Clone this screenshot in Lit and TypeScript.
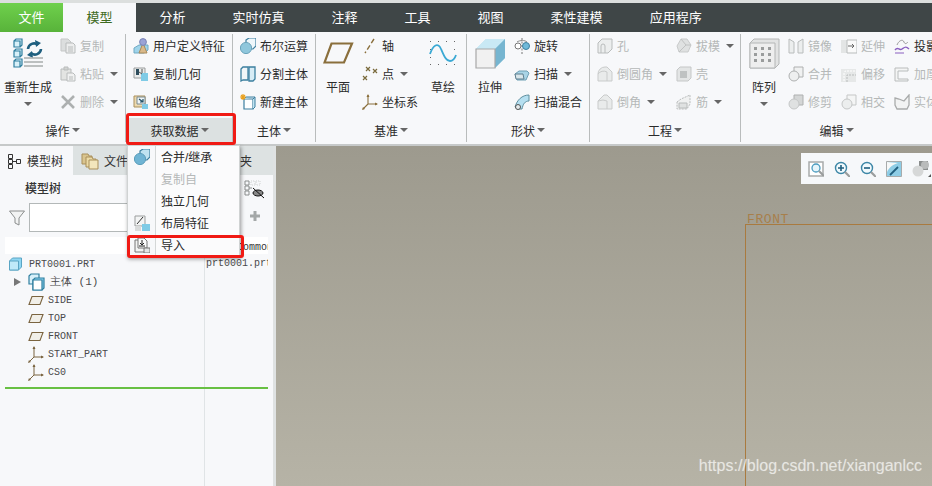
import { LitElement, html, css, svg } from 'lit';
import { customElement } from 'lit/decorators.js';

const ic = (body: unknown, w = 16, h = 16) =>
  html`<svg class="ic" width=${w} height=${h} viewBox="0 0 ${w} ${h}" fill="none">${body}</svg>`;

const G = '#b9bcbc'; // disabled stroke
const B = '#4b9cc0'; // blue stroke
const BR = '#8a6f3c'; // datum brown

const icons = {
  regen: ic(svg`
    <g fill="#d8f0f8" stroke="#2f7f9f" stroke-width="1.2">
      <path d="M1 3h6v6H1zM1 3l2-2h6v6l-2 2"/><path d="M1 13h6v6H1zM1 13l2-2h6v6l-2 2"/><path d="M1 23h6v6H1zM1 23l2-2h6v6l-2 2"/>
    </g>
    <path d="M15 11a6 6 0 0 1 10-4" stroke="#1f5f7f" stroke-width="2.6"/><path d="M22 2l6 3-5 4z" fill="#1f5f7f"/>
    <path d="M28 11a6 6 0 0 1-10 4" stroke="#1f5f7f" stroke-width="2.6"/><path d="M20 20l-6-3 5-4z" fill="#1f5f7f"/>
    <path d="M11 20h19M11 24h19M11 28h19" stroke="#a9adad" stroke-width="1.6"/>`, 31, 31),
  copy: ic(svg`<path d="M1 1h7l3 3v9H1z" fill="#dcdede" stroke="#c5c7c7"/><path d="M6 5h7l2 2v8H6z" fill="#eceded" stroke="${G}"/><path d="M8 9h5M8 11h5M8 13h5" stroke="${G}"/>`),
  paste: ic(svg`<path d="M1 3h10v11H1z" fill="#e3e4e2" stroke="${G}"/><path d="M4 1h4v3H4z" fill="#d2d4d2" stroke="${G}"/><path d="M7 7h6l2 2v6H7z" fill="#f0f1f1" stroke="${G}"/><path d="M9 11h4M9 13h4" stroke="${G}"/>`),
  del: ic(svg`<path d="M2 2l12 12M14 2L2 14" stroke="#adb0b0" stroke-width="2.6"/>`),
  udf: ic(svg`<path d="M1 10l5-3h9v5l-4 3H1z" fill="#9fd4ea" stroke="#6fa9c4"/><path d="M6 15l4-10 4 10z" fill="#d9b98a" stroke="#a98a5a"/><circle cx="10" cy="4" r="3.4" fill="#9aa3d6" stroke="#7a83b6"/>`),
  copygeo: ic(svg`<path d="M1 2h11v10H1z" fill="#e9ebeb" stroke="#9a9d9d"/><path d="M3 3h3v6H3z" fill="#2d4d5d"/><path d="M8 7h7v8H8z" fill="#7fcbe6"/><path d="M9 3v4M6 6l3 2" stroke="#555"/>`),
  shrink: ic(svg`<path d="M1 2h11v11H1z" fill="#ecd9ae" stroke="#a98f5a"/><path d="M4 3h8v7H4z" fill="#eef4f6" stroke="#7a8a90"/><path d="M6 5l4 3M10 5v3H7" stroke="#1f4f66" stroke-width="1.2"/><path d="M9 10h6v5H9z" fill="#7fcbe6"/>`),
  bool: ic(svg`<path d="M6 2l3-2h7v8l-3 3H6z" fill="#eef7fb" stroke="#3c7f9f" stroke-width="1.2"/><circle cx="6" cy="10" r="5.6" fill="#8fc7dc" stroke="#6ba3bb"/>`),
  split: ic(svg`<path d="M1 3l2-2h5v13H3l-2 1z" fill="#f2f6f8" stroke="#3c7f9f" stroke-width="1.3"/><path d="M9 1h6v12l-2 2H9z" fill="#d7ecf5" stroke="#3c7f9f" stroke-width="1.3"/>`),
  newbody: ic(svg`<path d="M4 5h9v10H4z" fill="#fff" stroke="#3c7f9f" stroke-width="1.2"/><path d="M13 5l2-2v10l-2 2M4 5l2-2h9" stroke="#3c7f9f" fill="#bfe3f1"/><path d="M3 0v6M0 3h6M1 1l4 4M5 1L1 5" stroke="#e9a11f" stroke-width="1.2"/>`),
  plane: ic(svg`<path d="M8.500 1.500H29L21 20.500H1.500z" stroke="${BR}" stroke-width="2.200"/>`, 31, 22),
  axis: ic(svg`<path d="M12 1L3 15" stroke="${BR}" stroke-width="1.400" stroke-dasharray="5 2.500"/>`),
  point: ic(svg`<path d="M4 1l4 4M8 1L4 5M11 3l4 4M15 3l-4 4M1 10l4 4M5 10l-4 4" stroke="#7a6a3c" stroke-width="1.200"/>`),
  csys: ic(svg`<path d="M6 1v9H15M6 10L1 15" stroke="${BR}" stroke-width="1.100"/><path d="M6 0l-1.500 3h3zM16 10l-3-1.500v3zM0 16l1-3 2 2z" fill="${BR}"/>`),
  sketch: ic(svg`
    <g fill="#666"><rect x="1" y="1" width="1" height="1"/><rect x="9" y="1" width="1" height="1"/><rect x="17" y="1" width="1" height="1"/><rect x="25" y="1" width="1" height="1"/>
    <rect x="1" y="9" width="1" height="1"/><rect x="25" y="9" width="1" height="1"/><rect x="1" y="17" width="1" height="1"/><rect x="25" y="17" width="1" height="1"/>
    <rect x="1" y="24" width="1" height="1"/><rect x="9" y="24" width="1" height="1"/><rect x="17" y="24" width="1" height="1"/><rect x="25" y="24" width="1" height="1"/></g>
    <path d="M1 14C4 5 9 2 12 9s5 12 9 12c3 0 5-3 6-6" stroke="#3aa9d4" stroke-width="1.800"/>`, 28, 26),
  extrude: ic(svg`<path d="M1 11L11 1h19v19L20 30H1z" fill="#a9d9ec"/><path d="M1 11L11 1h19L20 11z" fill="#c9e9f5"/><path d="M20 11L30 1v19L20 30z" fill="#76b5d0"/><path d="M1 11h19v19H1z" fill="#f1f1f1" stroke="#a8a8a8" stroke-width="1.200"/>`, 31, 31),
  revolve: ic(svg`<path d="M8 0v16" stroke="#777" stroke-dasharray="2 1.500"/><ellipse cx="4" cy="8" rx="3" ry="3" stroke="#777" fill="#fff"/><ellipse cx="12" cy="8" rx="3.500" ry="3.500" fill="#6fb9d9" stroke="#3c7f9f"/><path d="M3 4c3-2 8-2 10 0" stroke="#888"/>`),
  sweep: ic(svg`<path d="M1 8l4-3h8l2 2-3 7H3z" fill="#a9d4e6" stroke="#6f9fb4"/><path d="M1 8h8l1 5H2z" fill="#d9e6ea" stroke="#5f7f8f"/>`),
  blend: ic(svg`<path d="M1 13C3 6 8 1 15 1v6c-4 0-6 3-7 8H3z" fill="#b5dff0" stroke="#5f8f9f"/><circle cx="4" cy="13" r="2.500" fill="#e6ecee" stroke="#555"/>`),
  hole: ic(svg`<path d="M1 5l4-4h10v10l-4 4H1z" fill="#eceeee" stroke="${G}"/><path d="M4 15V8a2 2 0 0 1 4 0v7" stroke="${G}"/>`),
  round: ic(svg`<path d="M1 8a7 7 0 0 1 7-7h2l5 5v9H1z" fill="#e9ebeb" stroke="#c9cbcb"/><path d="M1 8a7 7 0 0 1 9-2v9" stroke="#c9cbcb"/>`),
  chamfer: ic(svg`<path d="M1 7l6-6h3l5 5v9H1z" fill="#e9ebeb" stroke="#c9cbcb"/><path d="M1 7l5-1 4 1v8" stroke="#c9cbcb"/>`),
  draft: ic(svg`<path d="M1 8l4-7h6l4 6-3 7H3z" fill="#dfe1e1" stroke="#c9cbcb"/><path d="M5 1l5 6-7 7M10 7l5 0" stroke="#c0c2c2"/>`),
  shell: ic(svg`<path d="M1 4l3-3h11v11l-3 3H1z" fill="#e3e5e5" stroke="#c5c7c7"/><path d="M4 5h7v7H4z" fill="#bfc2c2"/>`),
  rib: ic(svg`<path d="M1 8l4-3 9-4v9l-3 5H1z" fill="#f0f1f1" stroke="${G}" stroke-dasharray="2 1"/><path d="M3 9h8v5H3z" fill="#dfe1e1" stroke="${G}"/>`),
  pattern: ic(svg`<path d="M1 5l4-4h25v25l-4 4H1z" fill="#e2e3e3" stroke="#b4b6b6"/><path d="M1 5h25v25H1z" fill="#eeeeee" stroke="#b4b6b6"/>
    <g fill="#9a9c9c"><rect x="5" y="9" width="3" height="3"/><rect x="12" y="9" width="3" height="3"/><rect x="19" y="9" width="3" height="3"/><rect x="5" y="15" width="3" height="3"/><rect x="12" y="15" width="3" height="3"/><rect x="19" y="15" width="3" height="3"/><rect x="5" y="21" width="3" height="3"/><rect x="12" y="21" width="3" height="3"/><rect x="19" y="21" width="3" height="3"/></g>`, 31, 31),
  mirror: ic(svg`<path d="M1 1l5 3v11H1zM15 1l-5 3v11h5z" fill="#eceeee" stroke="${G}"/>`),
  extend: ic(svg`<path d="M0 2h6v13H0z" fill="#e3e5e5"/><path d="M6 2h10v13H6z" fill="#fafafa" stroke="${G}"/><path d="M7 8h6M11 6l2 2-2 2" stroke="#666"/>`),
  project: ic(svg`<path d="M3 7c2-5 6-6 7-3s3 1 4 0" stroke="#999"/><path d="M1 12c3-4 4 1 7-1s4-3 7 0" stroke="#8a5fc0" stroke-width="1.400"/><path d="M1 15h9" stroke="#8a5fc0"/>`),
  merge: ic(svg`<path d="M6 1h9v10H6z" fill="#f0f1f1" stroke="#aeb0b0"/><circle cx="6" cy="10" r="5" fill="#eeefef" stroke="#aeb0b0"/>`),
  offset: ic(svg`<path d="M0 3h15v13H0z" fill="#e6e8e8"/><path d="M3 15V7c0-1 1-2 2-2h10" stroke="#fff" stroke-dasharray="2 1"/><path d="M6 16V9h9" stroke="${G}" stroke-dasharray="2 1"/>`),
  thicken: ic(svg`<path d="M1 2h13v3H4v8h10v2H1z" fill="#f4f5f5" stroke="${G}"/>`),
  trim: ic(svg`<path d="M6 1h9v10H6z" fill="#d4d6d6" stroke="#aeb0b0"/><circle cx="6" cy="10" r="5" fill="#dfe1e1" stroke="#c5c7c7"/>`),
  intersect: ic(svg`<path d="M6 1h9v10H6z" fill="#f4f5f5" stroke="#c5c7c7"/><circle cx="6" cy="10" r="5" fill="#eceeee" stroke="#c5c7c7"/>`),
  solidify: ic(svg`<path d="M1 4l4 1 5 2 5-6v10l-2 4H3L1 11z" fill="#f2f3f3" stroke="#a9abab" stroke-width="1.300"/>`),
  mMerge: ic(svg`<path d="M6 2l3-2h7v8l-3 3H6z" fill="#bfe3f1" stroke="#3c7f9f" stroke-width="1.200"/><circle cx="6" cy="10" r="5.600" fill="#6fb4d4" stroke="#5a9dbb"/>`),
  mLayout: ic(svg`<path d="M1 1h10v10H1z" fill="#f3f4f4" stroke="#9a9d9d"/><path d="M3 9l6-7" stroke="#333"/><path d="M8 9h8v7H8z" fill="#7fcbe6"/><path d="M1 11h6v5H1z" fill="#d9dbdb"/>`),
  mImport: ic(svg`<path d="M1 3h11v12H1z" fill="#f2f3f3" stroke="#777"/><path d="M4 1h6l3 3v7H4z" fill="#fbfbfb" stroke="#777"/><path d="M8 3v5M6 6l2 2 2-2M5 9h6" stroke="#222"/><path d="M10 11h6v5h-6z" fill="#e3e5e5" stroke="#777"/>`),
  nodes: ic(svg`<path d="M1.500 1.500h4v4h-4zM1.500 6.500h4v4h-4zM1.500 11.500h4v4h-4zM9.500 6.500h4v4h-4z" stroke="#333"/><path d="M5.500 8.500h4" stroke="#333"/>`),
  folder: ic(svg`<path d="M1 2h6l1 2h3v8H1z" fill="#d9c48e" stroke="#a98f5a"/><path d="M5 5h6l1 2h3v8H5z" fill="#ecdba6" stroke="#a98f5a"/><path d="M8 8h9v9H8z" fill="#f3e6bc" stroke="#a98f5a"/>`, 19, 18),
  filter: ic(svg`<path d="M.5 1h15L10 8v7l-4-2V8z" fill="#f2f3f3" stroke="#8a8d8d"/>`),
  show: ic(svg`<path d="M1 1h4v4H1zM1 6h4v4H1zM1 11h4v4H1z" stroke="#8a8d8d"/><path d="M7 1h4v4H7zM12 1h4v4h-4z" stroke="#cfd1d1" stroke-dasharray="1 1"/><path d="M5 8h3" stroke="#8a8d8d"/><ellipse cx="14" cy="13" rx="5" ry="3" fill="#888" stroke="#111"/><path d="M9 8l11 10" stroke="#111"/>`, 20, 20),
  plus: ic(svg`<path d="M8 3v10M3 8h10" stroke="#a4a8a8" stroke-width="3"/>`),
  cube: ic(svg`<path d="M0.500 4l3-3h9v9l-3 3h-9z" fill="#8fd6f2" stroke="#5aa5c4"/><path d="M.5 4h9v9h-9z" fill="#bfe9f9" stroke="#5aa5c4"/>`, 14, 14),
  bodies: ic(svg`<path d="M1 3l2-2h8v8l-2 2H1z" fill="#d7f0fa" stroke="#2f7f9f" stroke-width="1.200"/><path d="M5 7l2-2h9v10l-2 2H5z" fill="#8fd6f2" stroke="#2f7f9f" stroke-width="1.200"/><path d="M5 7h9v10H5z" fill="#fff" stroke="#2f7f9f" stroke-width="1.200"/>`, 17, 18),
  tplane: ic(svg`<path d="M4 1.500h11l-3 8H1z" fill="#f1efe8" stroke="#7a6440" stroke-width="1.100"/>`, 16, 11),
  tcsys: ic(svg`<path d="M6 1v10h9M6 11l-5 5" stroke="#7a6440"/><path d="M6 0l-1.500 3h3zM16 11l-3-1.500v3zM0 17l1-3 2 2z" fill="#7a6440"/>`, 16, 17),
  fit: ic(svg`<path d="M1 1h14v14H1z" fill="#fff" stroke="#a8abab" stroke-width="1.500"/><circle cx="8" cy="7" r="4" fill="#e6f5fb" stroke="${B}" stroke-width="1.300"/><path d="M11 10l5 5" stroke="#9a9d9d" stroke-width="2.200"/>`),
  zin: ic(svg`<circle cx="7" cy="7" r="5.500" fill="#f2fafd" stroke="#3c86a6" stroke-width="1.400"/><path d="M7 4v6M4 7h6" stroke="#1f5f7f" stroke-width="1.600"/><path d="M11 11l5 5" stroke="#9a9d9d" stroke-width="2.200"/>`),
  zout: ic(svg`<circle cx="7" cy="7" r="5.500" fill="#f2fafd" stroke="#3c86a6" stroke-width="1.400"/><path d="M4 7h6" stroke="#1f5f7f" stroke-width="1.600"/><path d="M11 11l5 5" stroke="#9a9d9d" stroke-width="2.200"/>`),
  repaint: ic(svg`<path d="M.5 .5h15v15H.5z" fill="#8ecde6" stroke="#a8abab"/><path d="M1 11c2-5 7-8 11-9L1 1z" fill="#f6f8f8"/><path d="M4 14L12 6" stroke="#1f5f7f" stroke-width="1.800"/>`),
  spheres: ic(svg`<rect x="7" y="0" width="9" height="9" fill="#8a8d8d"/><circle cx="13" cy="4" r="4" fill="#b9bbbb"/><circle cx="6" cy="10" r="5.500" fill="#d6d8d8"/><path d="M19 16h-3l3-3z" fill="#555"/>`, 19, 16),
};

const arrow = html`<span class="arrow"></span>`;

@customElement('app-root')
export class AppRoot extends LitElement {
  static styles = css`
    :host {
      display: block;
      position: relative;
      width: 932px;
      height: 486px;
      overflow: hidden;
      font: 12px 'Liberation Sans', 'Noto Sans CJK SC', sans-serif;
      color: #2b2b2b;
      background: #f7f8fa;
    }
    .ic { display: block; flex: none; }

    .tabs {
      display: flex;
      height: 29px;
      border-top: 3px solid #dcdfde;
      background: #3f4647;
      color: #fff;
      font-size: 13px;
      line-height: 29px;
    }
    .tab { padding: 0 23.5px; white-space: nowrap; }
    .tab.file { padding: 0 18.5px; background: linear-gradient(#6fd04c, #58b33a); }
    .tab.on { background: #f7f8fa; color: #3f6b1f; }

    .ribbon {
      display: flex;
      height: 112px;
      border-bottom: 2px solid #c6c9c9;
      background: #f7f8fa;
    }
    .group {
      display: flex;
      flex-direction: column;
      flex: none;
      height: 108px;
      margin: 2px 0;
      border-right: 1px solid #b9bcbc;
      box-sizing: border-box;
    }
    .group:last-child { border-right: 0; }
    .g-op { width: 126px; }
    .g-get { width: 107px; }
    .g-body { width: 83px; }
    .g-datum { width: 151px; }
    .g-shape { width: 123px; }
    .g-eng { width: 151px; }
    .g-edit { width: 191px; }
    .content { display: flex; height: 84px; margin-top: -2px; gap: 1px; }
    .g-op .content { gap: 4px; }
    .g-get .content, .g-body .content, .g-eng .content { padding-left: 7px; }
    .g-datum .content { gap: 2px; }
    .g-eng .col:first-child { width: 78px; }
    .g-edit .col { width: 52px; flex: none; }

    .col { display: flex; flex-direction: column; }
    .item { display: flex; align-items: center; gap: 4px; height: 28px; white-space: nowrap; }
    .item span:not(.arrow) { padding-bottom: 2px; }
    .off { color: #b5b8b8; }
    .arrow {
      flex: none;
      width: 0;
      height: 0;
      margin-left: 2px;
      border: 4px solid transparent;
      border-top: 4px solid #666;
      border-bottom: 0;
    }
    .big { display: flex; flex-direction: column; align-items: center; flex: none; }
    .big .art { display: flex; align-items: center; height: 42px; }
    .big .txt { height: 18px; margin-top: 5px; line-height: 18px; white-space: nowrap; }
    .big .arrow { margin: 5px 0 0; }
    .w56 { width: 56px; }
    .w46 { width: 46px; }
    .w44 { width: 44px; }
    .w57 { width: 57px; }

    .label {
      display: flex;
      align-items: center;
      justify-content: center;
      gap: 2px;
      height: 24px;
      margin-top: 2px;
    }
    .label .arrow { margin-left: 0; }
    .label.active { background: #dce1e1; margin-left: 1px; }

    .main { display: flex; height: 340px; }
    .panel {
      display: flex;
      flex-direction: column;
      width: 276px;
      flex: none;
      border-right: 3px solid #dfe2e2;
      box-sizing: border-box;
    }
    .ptabs { display: flex; height: 29px; background: #dde2e2; flex: none; }
    .ptab { display: flex; align-items: center; gap: 4px; white-space: nowrap; color: #333; }
    .ptab.on { width: 73px; padding-left: 7px; box-sizing: border-box; background: #f7f8fa; }
    .ptab.f { width: 167px; padding-left: 8px; box-sizing: border-box; }
    .tools { display: grid; grid-template-columns: 205px 1fr; height: 62px; flex: none; }
    .tools-l { padding: 6px 0 0 25px; }
    .tools-l b { display: block; height: 16px; line-height: 16px; font-weight: 500; color: #333; }
    .find { display: flex; align-items: center; gap: 4px; margin: 6px 0 0 -16px; }
    .find i { display: block; width: 170px; height: 27px; background: #fff; border: 1px solid #b3b8b8; }
    .tools-r { padding: 5px 0 0 39px; }
    .tools-r .ic:last-child { margin: 8px 0 0 3px; }
    .thead {
      display: grid;
      grid-template-columns: 200px 63px;
      height: 17px;
      margin: 0 5px 1px;
      background: #fff;
      font: 10px/21px 'Liberation Mono', monospace;
      color: #333;
    }
    .thead span { overflow: hidden; height: 17px; padding-left: 32px; white-space: nowrap; box-sizing: border-box; }
    .tree {
      display: grid;
      grid-template-columns: 200px 63px;
      margin-left: 5px;
      flex: 1;
      font: 10px 'Liberation Mono', monospace;
      color: #4a4a4a;
      align-content: start;
      background: linear-gradient(#e0e4e6, #e0e4e6) 199px 0 / 1px 100% no-repeat;
    }
    .commons { padding: 0 0 0 1px; overflow: hidden; white-space: nowrap; line-height: 18px; }
    .node { display: flex; align-items: center; gap: 4px; height: 18px; padding-left: 23px; white-space: nowrap; }
    .node.root { padding-left: 4px; gap: 6px; }
    .node.sub { font-size: 11px; padding-left: 9px; gap: 5px; }
    .node.sub span:not(.tri) { padding-bottom: 1px; }
    .tri { width: 0; height: 0; border: 4px solid transparent; border-left: 7px solid #777; border-right: 0; margin-right: 2px; }
    .rule { height: 2px; margin-top: 6px; background: #68c043; grid-column: 1 / 3; }

    .canvas {
      position: relative;
      flex: 1;
      background: linear-gradient(#9d9a8e, #b6b3a6);
    }
    .view {
      position: absolute;
      top: 7px;
      left: 525px;
      right: 0;
      height: 31px;
      display: flex;
      align-items: center;
      gap: 10px;
      padding-left: 7px;
      background: #f6f8fa;
    }
    .flabel {
      position: absolute;
      left: 471px;
      top: 66px;
      font: 13px 'Liberation Mono', monospace;
      letter-spacing: .6px;
      color: #a97a3f;
      opacity: .85;
    }
    .frect {
      position: absolute;
      left: 469px;
      top: 78px;
      right: -20px;
      bottom: -20px;
      border: 1px solid #a97a3f;
    }
    .mark {
      position: absolute;
      right: 10px;
      top: 311px;
      font: 16px 'Liberation Sans', sans-serif;
      color: rgba(255, 255, 255, .6);
      text-shadow: 0 0 1px rgba(255, 255, 255, .3);
    }

    .menu {
      position: absolute;
      left: 127px;
      top: 145px;
      width: 113px;
      height: 112px;
      box-sizing: border-box;
      background: linear-gradient(90deg, #f7f8fa 27px, #d4d7d7 27px, #d4d7d7 28px, #fbfbfc 28px);
      border: 1px solid #d0d3d3;
      box-shadow: 1px 2px 4px rgba(0, 0, 0, .4);
    }
    .mi { display: flex; align-items: center; height: 22px; }
    .mi .slot { width: 27px; display: flex; justify-content: center; flex: none; }
    .mi .t { padding: 0 0 2px 6px; white-space: nowrap; }
    .red {
      position: absolute;
      box-sizing: border-box;
      border: 3px solid #f01a14;
      border-radius: 3px;
    }
    .red.a { left: 126px; top: 113px; width: 110px; height: 32px; }
    .red.b { left: 127px; top: 235px; width: 117px; height: 23px; }
  `;

  private row(icon: unknown, text: string, off = false, more = false) {
    return html`<div class="item ${off ? 'off' : ''}">${icon}<span>${text}</span>${more ? arrow : ''}</div>`;
  }

  private big(icon: unknown, text: string, w: string, more = false) {
    return html`<div class="big ${w}"><div class="art">${icon}</div><div class="txt">${text}</div>${more ? arrow : ''}</div>`;
  }

  private node(icon: unknown, text: string) {
    return html`<div class="node">${icon}<span>${text}</span></div>`;
  }

  render() {
    const tabs = ['分析', '实时仿真', '注释', '工具', '视图', '柔性建模', '应用程序'];
    return html`
      <div class="tabs">
        <div class="tab file">文件</div>
        <div class="tab on">模型</div>
        ${tabs.map((t) => html`<div class="tab">${t}</div>`)}
      </div>

      <div class="ribbon">
        <div class="group g-op">
          <div class="content">
            ${this.big(icons.regen, '重新生成', 'w56', true)}
            <div class="col">
              ${this.row(icons.copy, '复制', true)}
              ${this.row(icons.paste, '粘贴', true, true)}
              ${this.row(icons.del, '删除', true, true)}
            </div>
          </div>
          <div class="label">操作${arrow}</div>
        </div>
        <div class="group g-get">
          <div class="content">
            <div class="col">
              ${this.row(icons.udf, '用户定义特征')}
              ${this.row(icons.copygeo, '复制几何')}
              ${this.row(icons.shrink, '收缩包络')}
            </div>
          </div>
          <div class="label active">获取数据${arrow}</div>
        </div>
        <div class="group g-body">
          <div class="content">
            <div class="col">
              ${this.row(icons.bool, '布尔运算')}
              ${this.row(icons.split, '分割主体')}
              ${this.row(icons.newbody, '新建主体')}
            </div>
          </div>
          <div class="label">主体${arrow}</div>
        </div>
        <div class="group g-datum">
          <div class="content">
            ${this.big(icons.plane, '平面', 'w44')}
            <div class="col w57">
              ${this.row(icons.axis, '轴')}
              ${this.row(icons.point, '点', false, true)}
              ${this.row(icons.csys, '坐标系')}
            </div>
            ${this.big(icons.sketch, '草绘', 'w44')}
          </div>
          <div class="label">基准${arrow}</div>
        </div>
        <div class="group g-shape">
          <div class="content">
            ${this.big(icons.extrude, '拉伸', 'w46')}
            <div class="col">
              ${this.row(icons.revolve, '旋转')}
              ${this.row(icons.sweep, '扫描', false, true)}
              ${this.row(icons.blend, '扫描混合')}
            </div>
          </div>
          <div class="label">形状${arrow}</div>
        </div>
        <div class="group g-eng">
          <div class="content">
            <div class="col">
              ${this.row(icons.hole, '孔', true)}
              ${this.row(icons.round, '倒圆角', true, true)}
              ${this.row(icons.chamfer, '倒角', true, true)}
            </div>
            <div class="col">
              ${this.row(icons.draft, '拔模', true, true)}
              ${this.row(icons.shell, '壳', true)}
              ${this.row(icons.rib, '筋', true, true)}
            </div>
          </div>
          <div class="label">工程${arrow}</div>
        </div>
        <div class="group g-edit">
          <div class="content">
            ${this.big(icons.pattern, '阵列', 'w46', true)}
            <div class="col">
              ${this.row(icons.mirror, '镜像', true)}
              ${this.row(icons.merge, '合并', true)}
              ${this.row(icons.trim, '修剪', true)}
            </div>
            <div class="col">
              ${this.row(icons.extend, '延伸', true)}
              ${this.row(icons.offset, '偏移', true)}
              ${this.row(icons.intersect, '相交', true)}
            </div>
            <div class="col">
              ${this.row(icons.project, '投影')}
              ${this.row(icons.thicken, '加厚', true)}
              ${this.row(icons.solidify, '实体', true)}
            </div>
          </div>
          <div class="label">编辑${arrow}</div>
        </div>
      </div>

      <div class="main">
        <div class="panel">
          <div class="ptabs">
            <div class="ptab on">${icons.nodes}<span>模型树</span></div>
            <div class="ptab f">${icons.folder}<span>文件</span></div>
            <div class="ptab">夹</div>
          </div>
          <div class="tools">
            <div class="tools-l">
              <b>模型树</b>
              <div class="find">${icons.filter}<i></i></div>
            </div>
            <div class="tools-r">${icons.show}${icons.plus}</div>
          </div>
          <div class="thead"><i></i><span>Common</span></div>
          <div class="tree">
            <div class="names">
              <div class="node root">${icons.cube}<span>PRT0001.PRT</span></div>
              <div class="node sub"><span class="tri"></span>${icons.bodies}<span>主体 (1)</span></div>
              ${this.node(icons.tplane, 'SIDE')}
              ${this.node(icons.tplane, 'TOP')}
              ${this.node(icons.tplane, 'FRONT')}
              ${this.node(icons.tcsys, 'START_PART')}
              ${this.node(icons.tcsys, 'CS0')}
            </div>
            <div class="commons">prt0001.prt</div>
            <div class="rule"></div>
          </div>
        </div>
        <div class="canvas">
          <div class="flabel">FRONT</div>
          <div class="frect"></div>
          <div class="view">${icons.fit}${icons.zin}${icons.zout}${icons.repaint}${icons.spheres}</div>
          <div class="mark">https://blog.csdn.net/xianganlcc</div>
        </div>
      </div>

      <div class="menu">
        <div class="mi"><span class="slot">${icons.mMerge}</span><span class="t">合并/继承</span></div>
        <div class="mi off"><span class="slot"></span><span class="t">复制自</span></div>
        <div class="mi"><span class="slot"></span><span class="t">独立几何</span></div>
        <div class="mi"><span class="slot">${icons.mLayout}</span><span class="t">布局特征</span></div>
        <div class="mi"><span class="slot">${icons.mImport}</span><span class="t">导入</span></div>
      </div>
      <div class="red a"></div>
      <div class="red b"></div>
    `;
  }
}
